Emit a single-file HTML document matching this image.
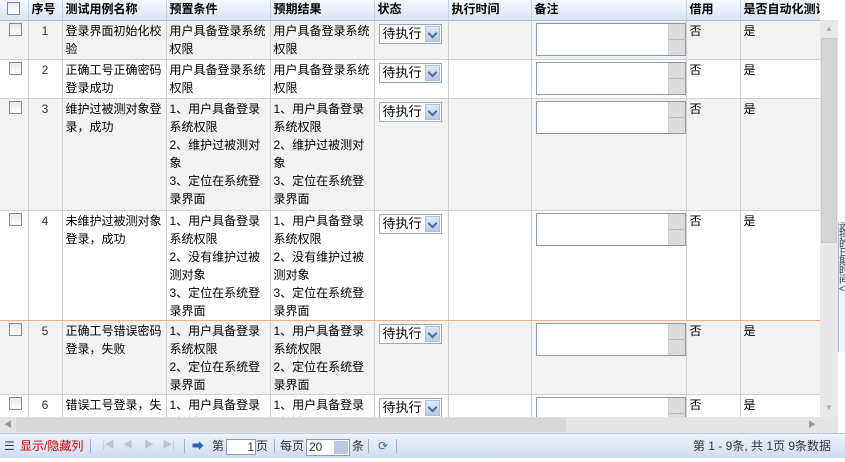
<!DOCTYPE html>
<html><head><meta charset="utf-8"><style>
*{margin:0;padding:0;box-sizing:border-box}
body{width:845px;height:462px;background:#fff;font:12px/18px "Liberation Sans","Noto Sans CJK SC",sans-serif;color:#000;position:relative;overflow:hidden}
#grid{position:absolute;left:0;top:0;width:820px;height:417px;overflow:hidden}
table{border-collapse:collapse;table-layout:fixed;width:820px}
td,th{border-right:1px solid #d0d0d0;border-bottom:1px solid #d0d0d0;vertical-align:top;padding:1px 3px 0;text-align:left;overflow:hidden;white-space:normal;word-break:break-all}
th{height:19px;background:linear-gradient(#f6f9fd,#d9e5f4);font-weight:bold;padding:1px 3px 0;border-bottom:1px solid #a9bcd3;border-right:1px solid #c5d2e3;white-space:nowrap;line-height:17px}
tr.g td{background:#f2f2f2}
tr.w td{background:#fff}
.cb{display:inline-block;width:13px;height:13px;border:1px solid #7b8aa0;background:linear-gradient(#e8e8e8,#fff);margin:1px 0 0 6px}
.num{text-align:center;color:#333}
.sel{display:inline-block;width:63px;height:20px;border:1px solid #9aa8ba;background:#fff;margin:2px 0 0 1px;position:relative;font-size:13px;line-height:18px;padding-left:3px}
.sel i{position:absolute;right:1px;top:1px;width:15px;height:16px;background:linear-gradient(#dfe8f6,#b6c9e6);border:1px solid #b0c0d8}
.sel i:after{content:"";position:absolute;left:3px;top:3px;width:5px;height:5px;border-right:2px solid #4a6fa8;border-bottom:2px solid #4a6fa8;transform:rotate(45deg)}
.ta{display:block;width:150px;height:33px;border:1px solid #8b98a8;background:#fff;margin:1px 0 0 1px;position:relative}
.ta i{position:absolute;right:0;top:0;width:17px;height:31px;background:#dcdcdc;border-left:1px solid #ccc}
.ta i:after{content:"";position:absolute;left:0;top:15px;width:17px;border-top:1px solid #bbb}
tr.o td{border-bottom:1px solid #f0b090}
#vs{position:absolute;left:820px;top:20px;width:18px;height:397px;background:#e8e8e8}
#vs .th{position:absolute;left:1px;top:18px;width:16px;height:205px;background:#d4d4d4;border:1px solid #c8c8c8}
#vs .a{position:absolute;left:0;width:18px;height:18px;color:#aaa;font-size:8px;text-align:center;line-height:18px}
#hs{position:absolute;left:0;top:417px;width:838px;height:16px;background:#e4e4e4}
#rp{position:absolute;left:838px;top:222px;width:7px;height:130px;background:#eef2fa;border-left:1px solid #a9bcd3;font-size:10px;line-height:9px;color:#333;overflow:hidden}
#tb{position:absolute;left:0;top:433px;width:845px;height:25px;background:linear-gradient(#eef3fb,#cfdcf0);border-top:1px solid #b8c8e0;font-size:12px;line-height:24px;color:#333}
#tb span{position:absolute;top:0}
.sep{width:1px;height:14px;background:#a0b0c8;top:5px!important}
</style></head><body>
<div id="grid"><table>
<colgroup><col style="width:28px"><col style="width:34px"><col style="width:104px"><col style="width:104px"><col style="width:104px"><col style="width:74px"><col style="width:83px"><col style="width:155px"><col style="width:54px"><col style="width:80px"></colgroup>
<tr><th><span class="cb" style="margin:1px 0 0 4px"></span></th><th>序号</th><th>测试用例名称</th><th>预置条件</th><th>预期结果</th><th>状态</th><th>执行时间</th><th>备注</th><th>借用</th><th>是否自动化测试</th></tr>
<tr class="g" style="height:39px"><td><span class="cb"></span></td><td class="num">1</td><td>登录界面初始化校验</td><td>用户具备登录系统权限</td><td>用户具备登录系统权限</td><td><span class="sel">待执行<i></i></span></td><td></td><td><span class="ta"><i></i></span></td><td>否</td><td>是</td></tr>
<tr class="w" style="height:39px"><td><span class="cb"></span></td><td class="num">2</td><td>正确工号正确密码登录成功</td><td>用户具备登录系统权限</td><td>用户具备登录系统权限</td><td><span class="sel">待执行<i></i></span></td><td></td><td><span class="ta"><i></i></span></td><td>否</td><td>是</td></tr>
<tr class="g" style="height:112px"><td><span class="cb"></span></td><td class="num">3</td><td>维护过被测对象登录，成功</td><td>1、用户具备登录系统权限<br>2、维护过被测对象<br>3、定位在系统登录界面</td><td>1、用户具备登录系统权限<br>2、维护过被测对象<br>3、定位在系统登录界面</td><td><span class="sel">待执行<i></i></span></td><td></td><td><span class="ta"><i></i></span></td><td>否</td><td>是</td></tr>
<tr class="w o" style="height:110px"><td><span class="cb"></span></td><td class="num">4</td><td>未维护过被测对象登录，成功</td><td>1、用户具备登录系统权限<br>2、没有维护过被测对象<br>3、定位在系统登录界面</td><td>1、用户具备登录系统权限<br>2、没有维护过被测对象<br>3、定位在系统登录界面</td><td><span class="sel">待执行<i></i></span></td><td></td><td><span class="ta"><i></i></span></td><td>否</td><td>是</td></tr>
<tr class="g" style="height:71px"><td><span class="cb"></span></td><td class="num">5</td><td>正确工号错误密码登录，失败</td><td>1、用户具备登录系统权限<br>2、定位在系统登录界面</td><td>1、用户具备登录系统权限<br>2、定位在系统登录界面</td><td><span class="sel">待执行<i></i></span></td><td></td><td><span class="ta"><i></i></span></td><td>否</td><td>是</td></tr>
<tr class="w" style="height:60px"><td><span class="cb"></span></td><td class="num">6</td><td>错误工号登录，失败</td><td>1、用户具备登录系统权限</td><td>1、用户具备登录系统权限</td><td><span class="sel">待执行<i></i></span></td><td></td><td><span class="ta"><i></i></span></td><td>否</td><td>是</td></tr>
</table></div>
<div id="vs"><div class="a" style="top:0">▲</div><div class="th"></div><div class="a" style="top:379px">▼</div></div>
<div id="hs"><div style="position:absolute;left:0;top:0;width:16px;height:16px;color:#999;font-size:8px;text-align:center;line-height:16px">◀</div><div style="position:absolute;left:16px;top:1px;width:550px;height:14px;background:#d8d8d8"></div><div style="position:absolute;left:804px;top:0;width:16px;height:16px;color:#999;font-size:8px;text-align:center;line-height:16px">▶</div></div>
<div id="rp">选<br>择<br>的<br>日<br>期<br>时<br>间<br>&lt;</div>
<div id="tb">
<span style="left:4px;color:#445">☰</span>
<span style="left:20px;color:#d00000">显示/隐藏列</span>
<span class="sep" style="left:90px"></span>
<span style="left:102px;color:#b8c4d8;font-size:10px">|◀&nbsp;&nbsp;&nbsp;◀&nbsp;&nbsp;&nbsp;&nbsp;▶&nbsp;&nbsp;&nbsp;▶|</span>
<span class="sep" style="left:184px"></span>
<span style="left:192px;color:#2a64b8">➡</span>
<span style="left:212px">第</span>
<span style="left:226px;top:5px;width:30px;height:16px;background:#fff;border:1px solid #8a9ab0;line-height:14px;text-align:right;padding-right:1px">1</span>
<span style="left:256px">页</span>
<span class="sep" style="left:274px"></span>
<span style="left:280px">每页</span>
<span style="left:306px;top:5px;width:44px;height:17px;background:#fff;border:1px solid #8a9ab0;line-height:15px;padding-left:2px">20<i style="position:absolute;right:1px;top:1px;width:14px;height:13px;background:#b6c9e6"></i></span>
<span style="left:352px">条</span>
<span class="sep" style="left:368px"></span>
<span style="left:378px;color:#2a64b8">⟳</span>
<span class="sep" style="left:396px"></span>
<span style="right:14px">第 1 - 9条, 共 1页 9条数据</span>
</div>
</body></html>
